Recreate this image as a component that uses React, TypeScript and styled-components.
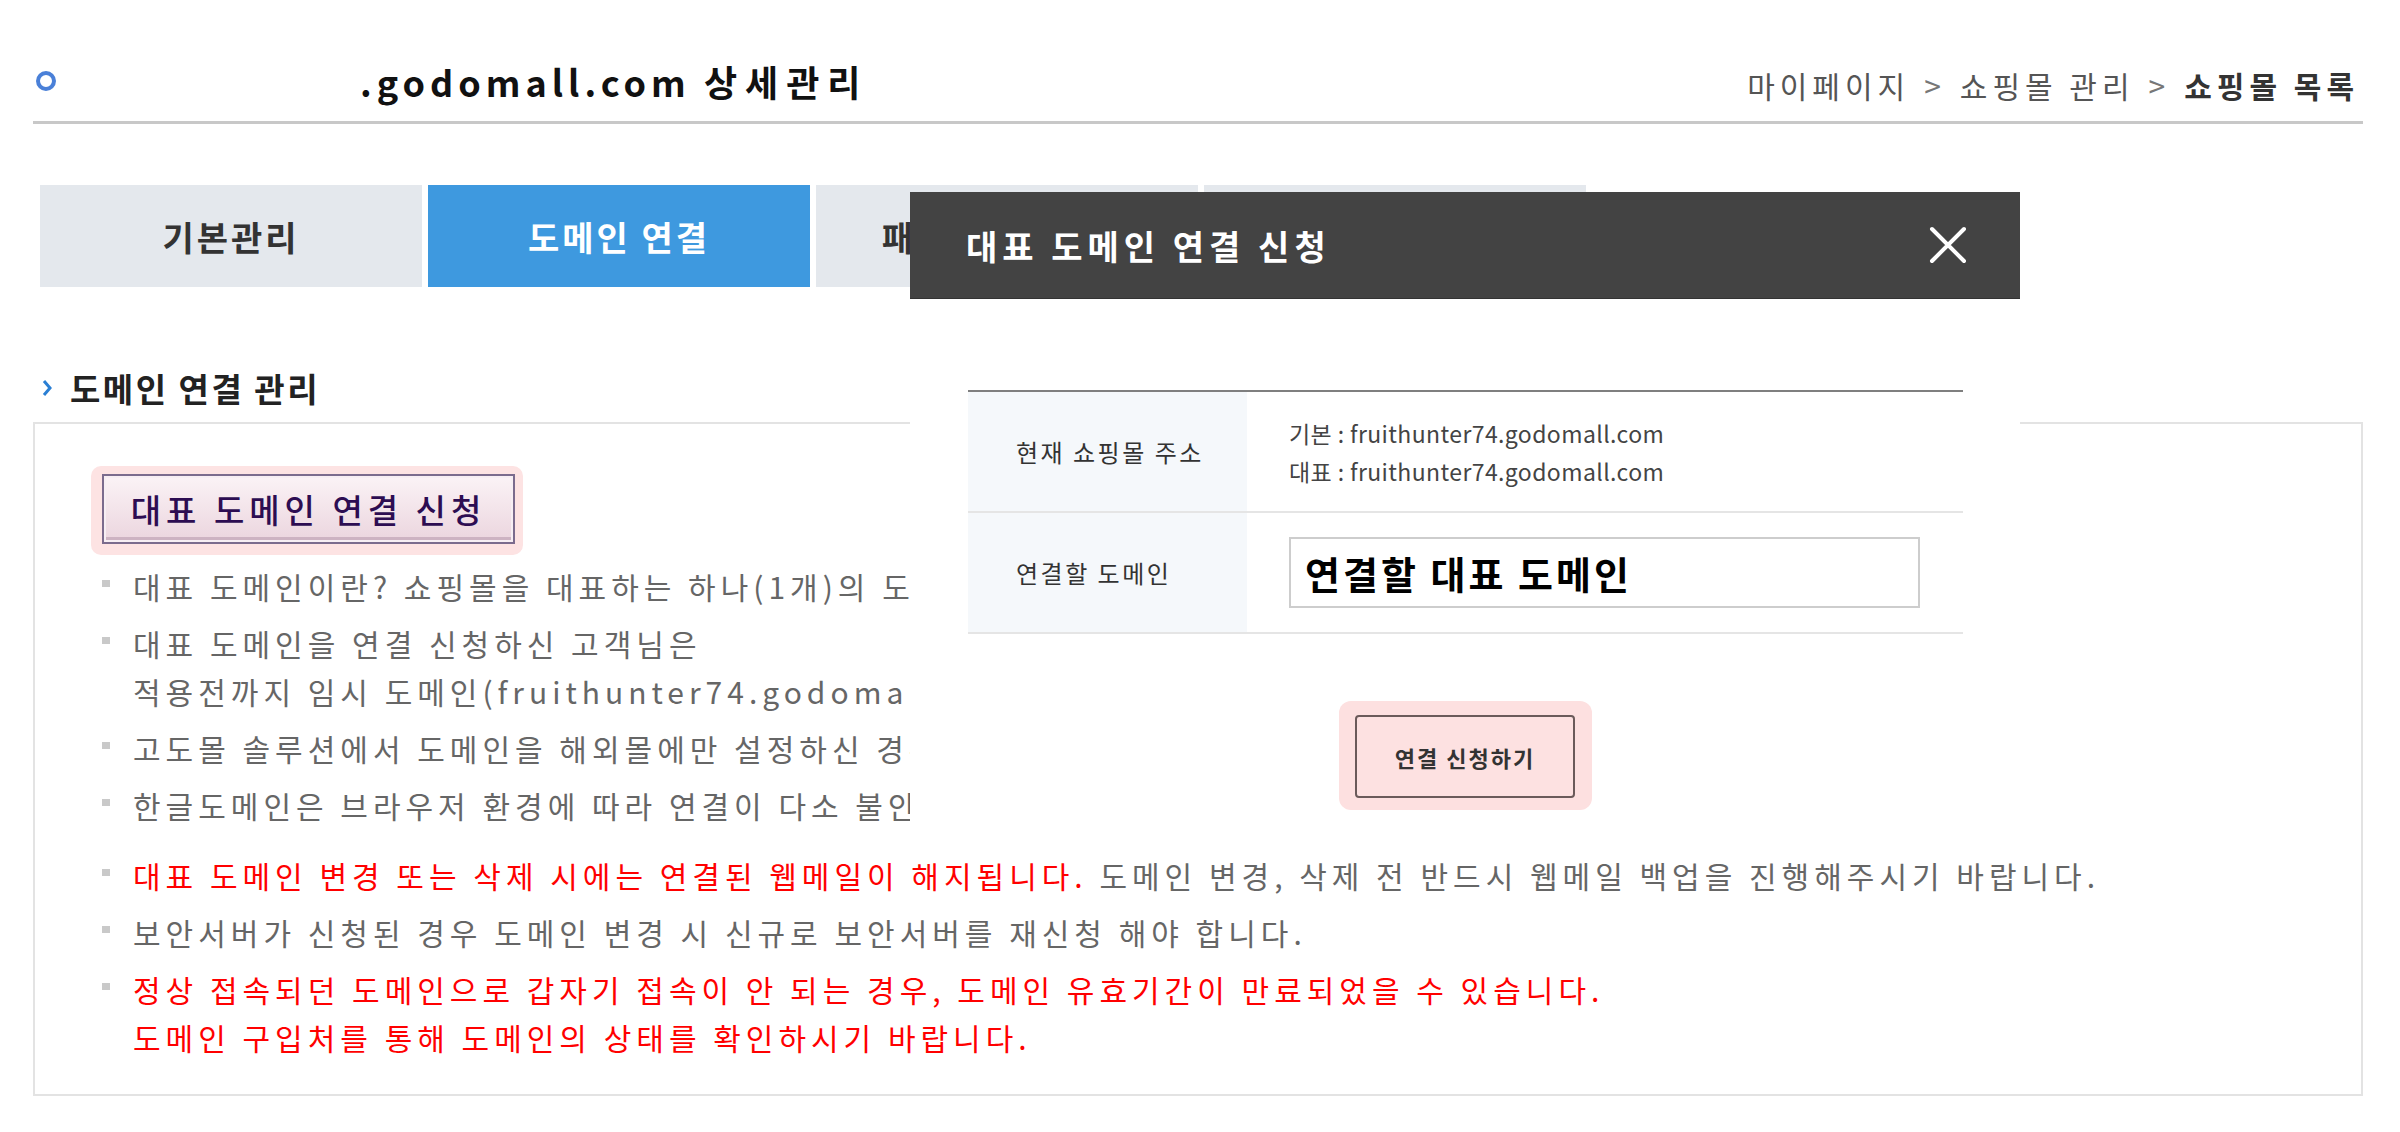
import React from "react";
import styled, { createGlobalStyle } from "styled-components";

const GlobalStyle = createGlobalStyle`
  html, body { margin: 0; padding: 0; background: #fff; }
  body { font-family: "Noto Sans CJK KR", "Noto Sans", sans-serif; color: #333; }
  * { box-sizing: border-box; }
`;

const Page = styled.div`
  position: relative;
  width: 2400px;
  height: 1132px;
  overflow: hidden;
  padding: 0 37px 0 33px;
`;

const Header = styled.header`
  display: flex;
  align-items: center;
  justify-content: space-between;
  height: 124px;
  padding-top: 40px;
  border-bottom: 3px solid #c8c8c8;
`;

const TitleGroup = styled.div`
  display: flex;
  align-items: center;
`;

const Dot = styled.span`
  display: block;
  width: 20px;
  height: 20px;
  margin-left: 3px;
  border: 4px solid #4a80d8;
  border-radius: 50%;
`;

const Title = styled.h1`
  margin: 0 0 0 304px;
  font-size: 36px;
  line-height: 44px;
  font-weight: 700;
  color: #111;
`;

const TitleDomain = styled.span`
  letter-spacing: 5px;
`;

const TitleSuffix = styled.span`
  letter-spacing: 8px;
`;

const Breadcrumb = styled.nav`
  display: flex;
  align-items: center;
  margin: 8px 4px 0 0;
  font-size: 30px;
  line-height: 40px;
  letter-spacing: 5px;
  color: #555;
`;

const Crumb = styled.span<{ $current?: boolean }>`
  font-weight: ${(p) => (p.$current ? 700 : 400)};
  color: ${(p) => (p.$current ? "#333" : "#555")};
`;

const Sep = styled.span`
  margin: 0 14px;
  color: #777;
`;

const Tabs = styled.div`
  display: flex;
  gap: 6px;
  margin-top: 61px;
  padding-left: 7px;
`;

const Tab = styled.div<{ $active?: boolean }>`
  width: 382px;
  height: 102px;
  display: flex;
  align-items: center;
  justify-content: center;
  font-size: 34px;
  font-weight: 700;
  letter-spacing: 3px;
  background: ${(p) => (p.$active ? "#3e99df" : "#e4e8ed")};
  color: ${(p) => (p.$active ? "#fff" : "#333")};
`;

const SectionTitle = styled.h2`
  display: flex;
  align-items: center;
  gap: 16px;
  margin: 81px 0 14px;
  padding-left: 7px;
  font-size: 33px;
  line-height: 40px;
  font-weight: 700;
  letter-spacing: 2.5px;
  color: #222;
`;

const Box = styled.section`
  border: 2px solid #e3e3e3;
  padding: 42px 0 33px 56px;
`;

const OldButtonWrap = styled.div`
  display: inline-flex;
  padding: 8px 8px 11px 11px;
  background: #fde3e3;
  border-radius: 10px;
`;

const OldButton = styled.button`
  width: 413px;
  height: 70px;
  display: flex;
  align-items: center;
  justify-content: center;
  border: 2px solid #7b6b8d;
  box-shadow: inset 0 0 0 2px #f7eef3, inset 0 -3px 0 2px #cdb3c2;
  background: linear-gradient(#fbf3f6, #ebd5de);
  font-family: inherit;
  font-size: 33px;
  font-weight: 500;
  letter-spacing: 5px;
  color: #2d0d52;
  padding: 0;
`;

const Notes = styled.ul<{ $gap?: number }>`
  list-style: none;
  margin: ${(p) => p.$gap ?? 7}px 0 0 11px;
  padding: 0;
`;

const Note = styled.li`
  position: relative;
  padding-left: 31px;
  font-size: 30px;
  line-height: 48px;
  letter-spacing: 5px;
  color: #666;
  white-space: nowrap;

  & + & {
    margin-top: 9px;
  }

  &::before {
    content: "";
    position: absolute;
    left: 0;
    top: 18px;
    width: 8px;
    height: 7px;
    background: #c9c9c9;
  }
`;

const Red = styled.span`
  color: #ff0000;
`;

const Modal = styled.div`
  position: absolute;
  left: 910px;
  top: 192px;
  width: 1110px;
  height: 643px;
  background: #fff;
`;

const ModalHeader = styled.div`
  height: 107px;
  display: flex;
  align-items: center;
  justify-content: space-between;
  padding: 0 53px 0 56px;
  background: #434343;
  border-bottom: 1px solid #333;
`;

const ModalTitle = styled.h3`
  margin: 0;
  font-size: 34px;
  font-weight: 700;
  letter-spacing: 5px;
  color: #fff;
`;

const CloseButton = styled.button`
  width: 38px;
  height: 38px;
  padding: 0;
  border: none;
  background: none;
  display: flex;
`;

const ModalBody = styled.div`
  padding: 91px 57px 0 58px;
`;

const InfoTable = styled.div`
  border-top: 2px solid #7f7f7f;
`;

const Row = styled.div`
  display: grid;
  grid-template-columns: 279px 1fr;
  height: 121px;
  border-bottom: 2px solid #e5e5e5;
`;

const Label = styled.div`
  display: flex;
  align-items: center;
  padding-left: 48px;
  background: #f5f8fb;
  font-size: 24px;
  letter-spacing: 2.5px;
  color: #333;
`;

const Value = styled.div`
  display: flex;
  flex-direction: column;
  justify-content: center;
  padding-left: 42px;
  font-size: 23px;
  line-height: 38px;
  letter-spacing: 0.4px;
  color: #444;
`;

const DomainInput = styled.input`
  width: 631px;
  height: 71px;
  border: 2px solid #cdcdcd;
  padding: 0 14px;
  font-family: inherit;
  font-size: 38px;
  font-weight: 700;
  letter-spacing: 3px;
  color: #000;
  outline: none;
  background: #fff;
`;

const SubmitArea = styled.div`
  display: flex;
  justify-content: center;
  margin-top: 67px;
`;

const SubmitWrap = styled.div`
  display: flex;
  padding: 14px 17px 12px 16px;
  background: #fde0e0;
  border-radius: 12px;
`;

const SubmitButton = styled.button`
  width: 220px;
  height: 83px;
  border: 2px solid #6b5a5a;
  border-radius: 4px;
  background: #fde1e1;
  font-family: inherit;
  font-size: 22px;
  font-weight: 700;
  letter-spacing: 2px;
  color: #333;
  padding: 0;
`;

const ChevronIcon = () => (
  <svg width="14" height="20" viewBox="0 0 14 20">
    <path d="M4 3 L10 10 L4 17" fill="none" stroke="#2a7fd4" strokeWidth="3" />
  </svg>
);

const CloseIcon = () => (
  <svg width="38" height="38" viewBox="0 0 38 38">
    <path
      d="M3 3 L35 35 M35 3 L3 35"
      stroke="#fff"
      strokeWidth="4"
      strokeLinecap="round"
      fill="none"
    />
  </svg>
);

export default function App() {
  return (
    <Page>
      <GlobalStyle />
      <Header>
        <TitleGroup>
          <Dot />
          <Title>
            <TitleDomain>.godomall.com </TitleDomain>
            <TitleSuffix>상세관리</TitleSuffix>
          </Title>
        </TitleGroup>
        <Breadcrumb>
          <Crumb>마이페이지</Crumb>
          <Sep>&gt;</Sep>
          <Crumb>쇼핑몰 관리</Crumb>
          <Sep>&gt;</Sep>
          <Crumb $current>쇼핑몰 목록</Crumb>
        </Breadcrumb>
      </Header>

      <Tabs>
        <Tab>기본관리</Tab>
        <Tab $active>도메인 연결</Tab>
        <Tab>패키지 기간연장</Tab>
        <Tab>보안서버 관리</Tab>
      </Tabs>

      <SectionTitle>
        <ChevronIcon />
        도메인 연결 관리
      </SectionTitle>

      <Box>
        <OldButtonWrap>
          <OldButton>대표 도메인 연결 신청</OldButton>
        </OldButtonWrap>
        <Notes>
          <Note>대표 도메인이란? 쇼핑몰을 대표하는 하나(1개)의 도메인을 말합니다.</Note>
          <Note>
            대표 도메인을 연결 신청하신 고객님은
            <br />
            적용전까지 임시 도메인(fruithunter74.godomall.com)으로 접속하실 수 있습니다.
          </Note>
          <Note>고도몰 솔루션에서 도메인을 해외몰에만 설정하신 경우 대표 도메인으로 연결됩니다.</Note>
          <Note>한글도메인은 브라우저 환경에 따라 연결이 다소 불안정할 수 있습니다.</Note>
        </Notes>
        <Notes $gap={22}>
          <Note>
            <Red>대표 도메인 변경 또는 삭제 시에는 연결된 웹메일이 해지됩니다.</Red> 도메인 변경, 삭제 전 반드시 웹메일 백업을 진행해주시기 바랍니다.
          </Note>
          <Note>보안서버가 신청된 경우 도메인 변경 시 신규로 보안서버를 재신청 해야 합니다.</Note>
          <Note>
            <Red>
              정상 접속되던 도메인으로 갑자기 접속이 안 되는 경우, 도메인 유효기간이 만료되었을 수 있습니다.
              <br />
              도메인 구입처를 통해 도메인의 상태를 확인하시기 바랍니다.
            </Red>
          </Note>
        </Notes>
      </Box>

      <Modal>
        <ModalHeader>
          <ModalTitle>대표 도메인 연결 신청</ModalTitle>
          <CloseButton aria-label="닫기">
            <CloseIcon />
          </CloseButton>
        </ModalHeader>
        <ModalBody>
          <InfoTable>
            <Row>
              <Label>현재 쇼핑몰 주소</Label>
              <Value>
                <span>기본 : fruithunter74.godomall.com</span>
                <span>대표 : fruithunter74.godomall.com</span>
              </Value>
            </Row>
            <Row>
              <Label>연결할 도메인</Label>
              <Value>
                <DomainInput defaultValue="연결할 대표 도메인" readOnly />
              </Value>
            </Row>
          </InfoTable>
          <SubmitArea>
            <SubmitWrap>
              <SubmitButton>연결 신청하기</SubmitButton>
            </SubmitWrap>
          </SubmitArea>
        </ModalBody>
      </Modal>
    </Page>
  );
}
